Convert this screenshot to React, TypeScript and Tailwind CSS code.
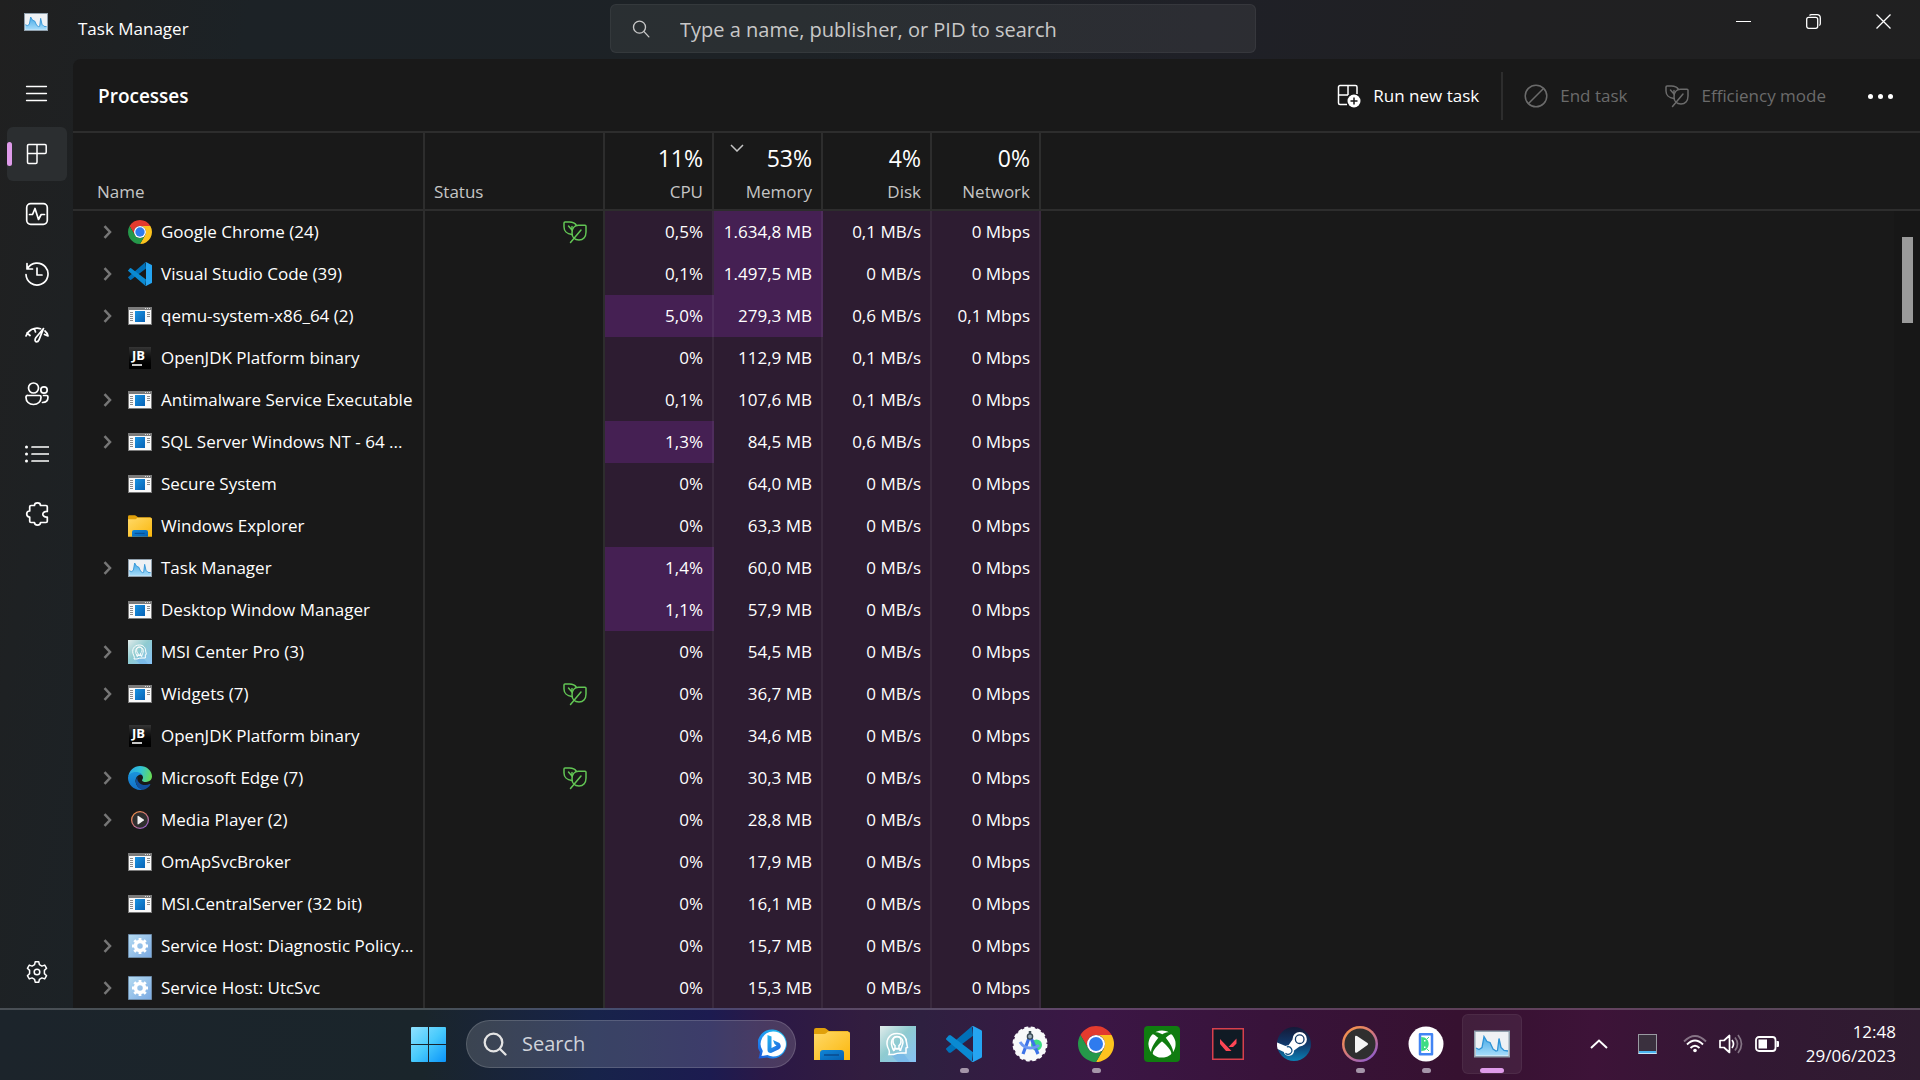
import type { ReactNode } from "react";
import { FaXbox } from "react-icons/fa";

type IconName = "chrome" | "vscode" | "app" | "jb" | "explorer" | "taskmgr" | "msi" | "edge" | "media" | "service";

/* ---------- application icons ---------- */

function Chrome({ className }: { className: string }) {
  return (
    <svg viewBox="2 2 44 44" className={className} aria-hidden="true">
      <path fill="#e33b2e" d="M14.47 29.5 4.95 13A22 22 0 0 1 43.05 13H24a11 11 0 0 0-9.53 16.5z" />
      <path fill="#fcc31e" d="M24 13h19.05A22 22 0 0 1 24 46l9.53-16.5A11 11 0 0 0 24 13z" />
      <path fill="#25984a" d="M33.53 29.5 24 46A22 22 0 0 1 4.95 13l9.52 16.5a11 11 0 0 0 19.06 0z" />
      <circle cx="24" cy="24" r="11" fill="#fff" />
      <circle cx="24" cy="24" r="8.6" fill="#2f7bee" />
    </svg>
  );
}

function VSCode({ className }: { className: string }) {
  return (
    <svg viewBox="0 0 100 100" className={className} aria-hidden="true">
      <path fill="#0070b8" d="M72 1 1 62q-2 2 0 4l7 8q2 1 5 0L75 27z" />
      <path fill="#0a8ad2" d="M72 99 1 38q-2-2 0-4l7-8q2-1 5 0l62 47z" />
      <path fill="#25a5f2" d="M71 1q3-2 6 0l20 10q3 1 3 4v70q0 3-3 4L77 99q-3 2-6 0 4 0 4-5V6q0-5-4-5z" />
    </svg>
  );
}

function AppWindow({ className }: { className: string }) {
  return (
    <svg viewBox="0 0 24 24" className={className} aria-hidden="true">
      <defs>
        <linearGradient id="appBlue" x1="0" y1="0" x2="1" y2="1">
          <stop offset="0" stopColor="#1a94e2" />
          <stop offset="1" stopColor="#0862b5" />
        </linearGradient>
      </defs>
      <path fill="#7b7b7b" d="M0 3h24v18H0z" />
      <path fill="#fafafa" d="M1 6h22v14H1z" />
      <path stroke="#ddd" d="M17 4.5h1M19 4.5h1M21 4.5h1" />
      <path stroke="#8b8b8b" d="M2 8.5h3M2 10.5h3M2 12.5h3M2 14.5h3M2 16.5h3M19 8.5h3M19 10.5h3M19 12.5h3" />
      <path fill="url(#appBlue)" d="M7 7h10v11H7z" />
    </svg>
  );
}

function JetBrains() {
  return (
    <span className="mx-px flex h-[22px] w-[22px] flex-col items-start bg-gradient-to-b from-[#353535] to-black pl-[3px] font-['Open_Sans',sans-serif]">
      <span className="text-[13px] leading-4 font-bold text-white">JB</span>
      <span className="mt-px h-0.5 w-2.5 bg-[#c8c8c8]" />
    </span>
  );
}

function Explorer({ className }: { className: string }) {
  return (
    <svg viewBox="0 0 36 36" className={className} aria-hidden="true">
      <defs>
        <linearGradient id="folder" x1="0" y1="0" x2="1" y2="1">
          <stop offset="0" stopColor="#ffd968" />
          <stop offset="1" stopColor="#fbb70c" />
        </linearGradient>
        <linearGradient id="folderBlue" x1="0" y1="0" x2="1" y2="1">
          <stop offset="0" stopColor="#1086d8" />
          <stop offset="1" stopColor="#0660b0" />
        </linearGradient>
      </defs>
      <path fill="#e0a00a" d="M0 4q0-2 2-2h8q1.5 0 2.5 1L15 5h19v6H0z" />
      <path fill="url(#folder)" d="M0 8h10q1.5 0 2.5-1l1.5-1.5h20q2 0 2 2V34H0z" />
      <path fill="url(#folderBlue)" d="M6 34v-7q0-3 3-3h18q3 0 3 3v7z" />
      <path stroke="#0a4a8c" strokeWidth="1.5" d="M10 29h15" />
    </svg>
  );
}

function TaskManagerIcon({ className }: { className: string }) {
  return (
    <svg viewBox="0 0 36 36" className={className} aria-hidden="true">
      <defs>
        <linearGradient id="tmArea" x1="0" y1="0" x2="0" y2="1">
          <stop offset="0" stopColor="#45a9e6" />
          <stop offset="1" stopColor="#a6dcfa" />
        </linearGradient>
      </defs>
      <path fill="#8f9fac" d="M0 4.5h36v27H0z" />
      <path fill="#eef1f4" d="M1.5 6h33v24h-33z" />
      <path fill="url(#tmArea)" d="M2 29.5V22l3 1.5 3-2 2-11 3 5 3 1 3 6.5 3 2 1.5-.5 1.5-12 2 9 3 3h1l3 .5v4.5z" />
      <path fill="none" stroke="#2e93d6" strokeWidth="1.3" d="m2 22 3 1.5 3-2 2-11 3 5 3 1 3 6.5 3 2 1.5-.5 1.5-12 2 9 3 3 4 .5" />
    </svg>
  );
}

function MsiCenter({ className }: { className: string }) {
  return (
    <svg viewBox="0 0 36 36" className={className} aria-hidden="true">
      <defs>
        <linearGradient id="msiBg" x1="0" y1="0" x2="1" y2="1">
          <stop offset="0" stopColor="#e2eceb" />
          <stop offset=".45" stopColor="#8fcbd0" />
          <stop offset="1" stopColor="#86c2f6" />
        </linearGradient>
      </defs>
      <path fill="url(#msiBg)" d="M0 0h36v36H0z" />
      <path fill="#6fb2ea" opacity=".6" d="M10 28h14l6 8H18z" />
      <g fill="none" stroke="#fff" strokeWidth="1.5">
        <path d="M9 28.5q1-2 0-4.500C4 15 9 7.500 17 7.500c6 0 9.500 4 9.500 9l1 5-1.500.5v5h-5q-4 0-7.500 1.500z" />
        <path d="M14 25q-3-5-2.500-9c.5-7 11-7 11.500 0 0 4-2 5-2.500 9" />
        <path d="M14 25v-2h6v2M17 10.500c-5 0-5 7-2 9v3h4v-3c3-2 3-9-2-9z" />
      </g>
    </svg>
  );
}

function Edge({ className }: { className: string }) {
  return (
    <svg viewBox="0 0 24 24" className={className} aria-hidden="true">
      <defs>
        <linearGradient id="edgeTop" x1="0" y1=".3" x2="1" y2=".5">
          <stop offset="0" stopColor="#2aa6e6" />
          <stop offset=".5" stopColor="#31c4d4" />
          <stop offset="1" stopColor="#67dc57" />
        </linearGradient>
        <linearGradient id="edgeLow" x1="0" y1="0" x2="0" y2="1">
          <stop offset="0" stopColor="#1a94dc" />
          <stop offset="1" stopColor="#1470c8" />
        </linearGradient>
      </defs>
      <path fill="url(#edgeTop)" d="M.3 10.5C1.200 4.500 6 0 12 0c7 0 12 5 12 10.300 0 3.700-3 5.700-6 5.700-2.500 0-4-.9-4-1.800 0-.7 1-1 1-2.700 0-2.500-2.500-4.500-6-4.500C5 7 1.500 8.500.3 10.500z" />
      <path fill="url(#edgeLow)" d="M0 12c0-3.500 3.500-6 8-6 4.500 0 7 2.500 7 5.300 0-1.500-1.500-2.800-3-2.800-3.500 1-5.500 5-4 9 1.200 3.500 4.500 6 7.500 6.200C7.500 25.500 0 19.500 0 12z" />
      <path fill="#124f9c" d="M9.500 11c-2 2.500-2.200 5.500-.5 8.500 1.500 2.700 4.500 4.500 6.500 4.200 3-.7 5.500-2.700 6.800-5 .3-.5-.1-.8-.6-.6-3.200 1.500-8 1.500-10.700-1.600C9.500 15 9 13 9.500 11z" />
    </svg>
  );
}

function MediaPlayer({ className }: { className: string }) {
  return (
    <svg viewBox="0 0 36 36" className={className} aria-hidden="true">
      <defs>
        <linearGradient id="mpRing" x1="0" y1="0" x2=".8" y2="1">
          <stop offset="0" stopColor="#ff9a3c" />
          <stop offset=".5" stopColor="#d87a78" />
          <stop offset="1" stopColor="#8b5bd0" />
        </linearGradient>
      </defs>
      <circle cx="18" cy="18" r="18" fill="url(#mpRing)" />
      <circle cx="18" cy="18" r="15.5" fill="#2f2f2f" />
      <path fill="#f4f4f4" d="M13 11q0-2 2-1l10.500 7q1.300 1 0 2L15 26.500q-2 1-2-1z" />
    </svg>
  );
}

function ServiceGear({ className }: { className: string }) {
  return (
    <svg viewBox="0 0 24 24" className={className} aria-hidden="true">
      <defs>
        <linearGradient id="svcBg" x1="0" y1="0" x2="1" y2="1">
          <stop offset="0" stopColor="#b5dcf2" />
          <stop offset="1" stopColor="#7aa9e2" />
        </linearGradient>
      </defs>
      <path fill="url(#svcBg)" stroke="#6d8ba8" d="M.5.5h23v23H.5z" />
      <circle cx="12" cy="12" r="4.500" fill="none" stroke="#fff" strokeWidth="3.500" />
      <path stroke="#fff" strokeWidth="2.800" d="M12 4v3M12 17v3M4 12h3M17 12h3M6.300 6.300l2 2M15.700 15.700l2 2M6.300 17.700l2-2M15.700 8.300l2-2" />
    </svg>
  );
}

function AndroidStudio({ className }: { className: string }) {
  return (
    <svg viewBox="0 0 36 36" className={className} aria-hidden="true">
      <circle cx="18" cy="18" r="16.5" fill="#f8f9fa" stroke="#f8f9fa" strokeWidth="2" strokeDasharray="4 2.500" />
      <circle cx="24.500" cy="19" r="5.500" fill="#3ddc84" />
      <path fill="none" stroke="#3d73e8" strokeWidth="3.200" d="m17 12-6 16M19 12l7 16" />
      <path fill="none" stroke="#6b97f2" strokeWidth="3" d="M8 16q4 6 10 6 6 0 9-3" />
      <path stroke="#3b4a54" strokeWidth="2.500" d="M18 5v4" />
      <circle cx="18" cy="10.500" r="2.600" fill="#9fb0bb" stroke="#3b4a54" strokeWidth="1.400" />
    </svg>
  );
}

function Xbox() {
  return (
    <span className="flex h-9 w-9 items-center justify-center rounded-sm bg-[#107c10]">
      <FaXbox className="h-7 w-7 text-white" />
    </span>
  );
}

function Valorant({ className }: { className: string }) {
  return (
    <svg viewBox="0 0 36 36" className={className} aria-hidden="true">
      <path fill="#101a24" stroke="#d8404c" strokeWidth="1.500" d="M2.750 2.750h30.500v30.500H2.750z" />
      <path fill="#ff4655" d="M10 13v5l6 7h5.500zM26.500 12.500v5L23 21h-4.500z" />
    </svg>
  );
}

function Steam({ className }: { className: string }) {
  return (
    <svg viewBox="0 0 36 36" className={className} aria-hidden="true">
      <defs>
        <linearGradient id="steamBg" x1="0" y1="0" x2="0" y2="1">
          <stop offset="0" stopColor="#141a38" />
          <stop offset=".5" stopColor="#10386a" />
          <stop offset="1" stopColor="#0b80b4" />
        </linearGradient>
      </defs>
      <circle cx="18" cy="18" r="17" fill="url(#steamBg)" />
      <path fill="#fff" d="M1.100 16.500 9.500 20q1.300-.8 3-.8l4-5.700v-.3a7.200 7.200 0 1 1 7.200 7.200h-.2l-5.500 4v.3a5.200 5.200 0 0 1-10.200 1.200L1.600 23a17 17 0 0 1-.5-6.500z" />
      <circle cx="23.700" cy="13.200" r="4.300" fill="#fff" stroke="#123a68" strokeWidth="1.300" />
      <path fill="none" stroke="#0e4c80" strokeWidth="1.200" d="M9.500 27.300a3.800 3.800 0 1 0 1.300-6.400" />
    </svg>
  );
}

function AndroidEmulator({ className }: { className: string }) {
  return (
    <svg viewBox="0 0 36 36" className={className} aria-hidden="true">
      <circle cx="18" cy="18" r="17.500" fill="#fff" />
      <path fill="#fff" stroke="#4285f4" strokeWidth="2.500" strokeLinejoin="round" d="M12 8.200h12v20H12z" />
      <path fill="#3ddc84" d="M13.200 11c5 0 7.500 3.500 7.500 7s-2.500 7-7.500 7z" />
      <path stroke="#3ddc84" d="m19 13 2-2M19 23l2 2" />
      <path fill="#fff" d="M16 14h1.500v1.500H16zM16 20.500h1.500V22H16z" />
    </svg>
  );
}

function WindowsLogo() {
  return (
    <svg viewBox="0 0 35 35" className="h-[35px] w-[35px]" aria-hidden="true">
      <defs>
        <linearGradient id="win" x1="0" y1="0" x2="35" y2="35" gradientUnits="userSpaceOnUse">
          <stop offset="0" stopColor="#90e2ff" />
          <stop offset=".5" stopColor="#48cafc" />
          <stop offset="1" stopColor="#0a94fa" />
        </linearGradient>
      </defs>
      <path fill="url(#win)" d="M1 0h16v17H0V1q0-1 1-1zM18 0h16q1 0 1 1v16H18zM0 18h17v17H1q-1 0-1-1zM18 18h17v16q0 1-1 1H18z" />
    </svg>
  );
}

function Bing() {
  return (
    <svg viewBox="0 0 30 30" className="h-[30px] w-[30px]" aria-hidden="true">
      <defs>
        <linearGradient id="bingRing" x1="1" y1="0" x2="0" y2="1">
          <stop offset="0" stopColor="#22c8f0" />
          <stop offset=".6" stopColor="#1d8ff0" />
          <stop offset="1" stopColor="#1a52d8" />
        </linearGradient>
        <linearGradient id="bingB" x1="0" y1="0" x2="1" y2="1">
          <stop offset="0" stopColor="#25b8ee" />
          <stop offset="1" stopColor="#1c5ee0" />
        </linearGradient>
      </defs>
      <path fill="url(#bingRing)" d="M15 .5A14.500 14.500 0 1 1 9 28.500L1 29.500q-1-.5 0-1.500l1-5A14.500 14.500 0 0 1 15 .5z" />
      <path fill="#fff" d="M15 2.500A12.500 12.500 0 1 1 9.500 26L3.500 27l1.300-5A12.500 12.500 0 0 1 15 2.500z" />
      <path fill="url(#bingB)" d="m9.500 6 4 1.500V19l5-2.500-2-1.500-1.500-4 6.500 3q3 4-1 6.500L13 24q-3.500 0-3.500-3z" />
    </svg>
  );
}

const iconFor: Record<IconName, ReactNode> = {
  chrome: <Chrome className="h-6 w-6" />,
  vscode: <VSCode className="h-6 w-6" />,
  app: <AppWindow className="h-6 w-6" />,
  jb: <JetBrains />,
  explorer: <Explorer className="h-6 w-6" />,
  taskmgr: <TaskManagerIcon className="h-6 w-6" />,
  msi: <MsiCenter className="h-6 w-6" />,
  edge: <Edge className="h-6 w-6" />,
  media: <MediaPlayer className="m-[3px] h-[18px] w-[18px]" />,
  service: <ServiceGear className="h-6 w-6" />,
};

/* ---------- line icons ---------- */

function Line({ children, className = "h-6 w-6", width = 1.5 }: { children: ReactNode; className?: string; width?: number }) {
  return (
    <svg viewBox="0 0 24 24" className={className} fill="none" stroke="currentColor" strokeWidth={width} strokeLinecap="round" strokeLinejoin="round" aria-hidden="true">
      {children}
    </svg>
  );
}

function Leaf({ className }: { className: string }) {
  return (
    <Line className={className}>
      <path d="M8.800 14.500C4 14 1 11 1 7V3a1 1 0 0 1 1-1h4.500c3 0 5.500 1 7 3.300" />
      <path d="M15.500 5.200H22a1 1 0 0 1 1 1V12c0 5-3 8-7 8-4.500 0-7-3-7-7 0-4.500 2.500-7.800 6.500-7.800z" />
      <path d="M18 10 7.500 22.500M5.500 6l3.700 4.300M9 6.500v3.700" />
    </Line>
  );
}

const navItems: { label: string; icon: ReactNode }[] = [
  { label: "Processes", icon: <Line><path d="M3.700 2.500h16.300a1.200 1.200 0 0 1 1.200 1.200v6.600a1.200 1.200 0 0 1-1.200 1.200H2.500M12 2.500v17.800a1.200 1.200 0 0 1-1.200 1.200H3.700a1.200 1.200 0 0 1-1.200-1.200V3.700a1.200 1.200 0 0 1 1.200-1.200" /></Line> },
  { label: "Performance", icon: <Line width={1.7}><rect x="1.700" y="1.700" width="20.600" height="20.600" rx="4" /><path d="M4.500 12.500h3l2.500-6 3.500 11 2.700-5h3.300" /></Line> },
  { label: "App history", icon: <Line width={1.7}><path d="M2 1.500V7h5.500M2.500 6.500A11 11 0 1 1 1 12.500M12 6v7h5" /></Line> },
  { label: "Startup apps", icon: <Line width={1.7}><path d="M1 14c1-3 3-5 5.500-6.500 3-1.500 6.500-1.700 9-.8M2 11l3 2.500M9.500 7l1 3M18.500 6.500l-7.700 9.300c-1.500 2.500-.5 4 .7 4s2-.8 2.500-2zM20 9c1.500 1.200 2.500 3 3 5l-3.500-1.500" /></Line> },
  { label: "Users", icon: <Line width={1.7}><circle cx="8.500" cy="6" r="5" /><circle cx="19" cy="8" r="3.200" /><path d="M3 13.500h11.500a1.500 1.500 0 0 1 1.500 1.500v.5c0 4-3 7-7.500 7S1 19.500 1 15.500V15a1.500 1.500 0 0 1 2-1.500zM18.500 13.500h3a1.500 1.500 0 0 1 1.500 1.500c0 4-2.500 5.500-5.500 5.500" /></Line> },
  { label: "Details", icon: <Line width={1.7}><path d="M7 5h16.500M7 12h16.500M7 19h16.500" /><path strokeWidth="3" d="M1.500 5h0M1.500 12h0M1.500 19h0" /></Line> },
  { label: "Services", icon: <Line width={1.7}><path d="M4.700 9V4.800A1.300 1.300 0 0 1 6 3.500h3.500c0-3.500 6-3.500 6 0H21a1.300 1.300 0 0 1 1.300 1.300v4.700c-6-.5-6 6 0 5.500v4.200a1.300 1.300 0 0 1-1.300 1.300h-5.500c0 3.500-6 3.500-6 0H6a1.300 1.300 0 0 1-1.300-1.300V15c-4 0-4-6 0-6z" /></Line> },
];

function NavButton({ label, active = false, children }: { label: string; active?: boolean; children: ReactNode }) {
  return (
    <button
      type="button"
      aria-label={label}
      className={`flex h-[54px] w-[60px] items-center rounded-md text-white ${active ? "bg-[#2b2e30]" : ""}`}
    >
      <span className={`h-6 w-[5px] rounded-full ${active ? "bg-[#df9bea]" : ""}`} />
      <span className="ml-[13px]">{children}</span>
    </button>
  );
}

/* ---------- data ---------- */

interface Process {
  name: string;
  icon: IconName;
  expandable?: boolean;
  efficient?: boolean;
  cpu: string;
  memory: string;
  disk: string;
  network?: string;
  hotCpu?: boolean;
  hotMemory?: boolean;
}

const processes: Process[] = [
  { name: "Google Chrome (24)", icon: "chrome", expandable: true, efficient: true, cpu: "0,5%", memory: "1.634,8 MB", disk: "0,1 MB/s", hotMemory: true },
  { name: "Visual Studio Code (39)", icon: "vscode", expandable: true, cpu: "0,1%", memory: "1.497,5 MB", disk: "0 MB/s", hotMemory: true },
  { name: "qemu-system-x86_64 (2)", icon: "app", expandable: true, cpu: "5,0%", memory: "279,3 MB", disk: "0,6 MB/s", network: "0,1 Mbps", hotCpu: true, hotMemory: true },
  { name: "OpenJDK Platform binary", icon: "jb", cpu: "0%", memory: "112,9 MB", disk: "0,1 MB/s" },
  { name: "Antimalware Service Executable", icon: "app", expandable: true, cpu: "0,1%", memory: "107,6 MB", disk: "0,1 MB/s" },
  { name: "SQL Server Windows NT - 64 ...", icon: "app", expandable: true, cpu: "1,3%", memory: "84,5 MB", disk: "0,6 MB/s", hotCpu: true },
  { name: "Secure System", icon: "app", cpu: "0%", memory: "64,0 MB", disk: "0 MB/s" },
  { name: "Windows Explorer", icon: "explorer", cpu: "0%", memory: "63,3 MB", disk: "0 MB/s" },
  { name: "Task Manager", icon: "taskmgr", expandable: true, cpu: "1,4%", memory: "60,0 MB", disk: "0 MB/s", hotCpu: true },
  { name: "Desktop Window Manager", icon: "app", cpu: "1,1%", memory: "57,9 MB", disk: "0 MB/s", hotCpu: true },
  { name: "MSI Center Pro (3)", icon: "msi", expandable: true, cpu: "0%", memory: "54,5 MB", disk: "0 MB/s" },
  { name: "Widgets (7)", icon: "app", expandable: true, efficient: true, cpu: "0%", memory: "36,7 MB", disk: "0 MB/s" },
  { name: "OpenJDK Platform binary", icon: "jb", cpu: "0%", memory: "34,6 MB", disk: "0 MB/s" },
  { name: "Microsoft Edge (7)", icon: "edge", expandable: true, efficient: true, cpu: "0%", memory: "30,3 MB", disk: "0 MB/s" },
  { name: "Media Player (2)", icon: "media", expandable: true, cpu: "0%", memory: "28,8 MB", disk: "0 MB/s" },
  { name: "OmApSvcBroker", icon: "app", cpu: "0%", memory: "17,9 MB", disk: "0 MB/s" },
  { name: "MSI.CentralServer (32 bit)", icon: "app", cpu: "0%", memory: "16,1 MB", disk: "0 MB/s" },
  { name: "Service Host: Diagnostic Policy...", icon: "service", expandable: true, cpu: "0%", memory: "15,7 MB", disk: "0 MB/s" },
  { name: "Service Host: UtcSvc", icon: "service", expandable: true, cpu: "0%", memory: "15,3 MB", disk: "0 MB/s" },
];

const usage = [
  { label: "CPU", total: "11%" },
  { label: "Memory", total: "53%", sorted: true },
  { label: "Disk", total: "4%" },
  { label: "Network", total: "0%" },
];

const pinned: { label: string; icon: ReactNode; state?: "running" | "active" }[] = [
  { label: "File Explorer", icon: <Explorer className="h-9 w-9" /> },
  { label: "MSI Center", icon: <MsiCenter className="h-9 w-9" /> },
  { label: "Visual Studio Code", icon: <VSCode className="h-9 w-9" />, state: "running" },
  { label: "Android Studio", icon: <AndroidStudio className="h-9 w-9" /> },
  { label: "Google Chrome", icon: <Chrome className="h-9 w-9" />, state: "running" },
  { label: "Xbox", icon: <Xbox /> },
  { label: "Valorant", icon: <Valorant className="h-9 w-9" /> },
  { label: "Steam", icon: <Steam className="h-9 w-9" /> },
  { label: "Media Player", icon: <MediaPlayer className="h-9 w-9" />, state: "running" },
  { label: "Android Emulator", icon: <AndroidEmulator className="h-9 w-9" />, state: "running" },
  { label: "Task Manager", icon: <TaskManagerIcon className="h-9 w-9" />, state: "active" },
];

/* ---------- sections ---------- */

function TitleBar() {
  return (
    <header className="flex h-[59px] shrink-0 items-start">
      <div className="flex h-full flex-1 items-start">
        <TaskManagerIcon className="mt-2.5 ml-6 h-6 w-6" />
        <h1 className="ml-[30px] pt-[17px] text-[17px] leading-6 text-white">Task Manager</h1>
      </div>
      <label className="mt-1 mr-[54px] flex h-[49px] w-[646px] items-center rounded-md border border-white/5 bg-white/6">
        <Line className="ml-[21px] h-[18px] w-[18px] text-[#c8c8c8]" width={1.8}>
          <circle cx="10" cy="9.500" r="8" />
          <path d="m16 15.500 6.500 7" />
        </Line>
        <input
          type="text"
          aria-label="Search processes"
          placeholder="Type a name, publisher, or PID to search"
          className="mt-0.5 ml-[30px] min-w-0 flex-1 bg-transparent text-[20px] text-white outline-none placeholder:text-[#c8c8c8]"
        />
      </label>
      <div className="flex flex-1 justify-end text-white">
        <div className="flex pr-[2px]">
          <button type="button" aria-label="Minimize" className="flex h-[42px] w-[70px] items-center justify-center">
            <span className="h-px w-[15px] bg-white" />
          </button>
          <button type="button" aria-label="Restore" className="flex h-[42px] w-[70px] items-center justify-center">
            <svg viewBox="0 0 15 15" className="h-[15px] w-[15px]" fill="none" stroke="currentColor" strokeWidth="1.300" aria-hidden="true">
              <rect x=".7" y="3.300" width="11" height="11" rx="2" />
              <path d="M3.500 1.500Q4 .7 5.500.7H11q3.300 0 3.300 3.300v5.500q0 1.500-1 2" />
            </svg>
          </button>
          <button type="button" aria-label="Close" className="flex h-[42px] w-[70px] items-center justify-center">
            <svg viewBox="0 0 15 15" className="h-[15px] w-[15px]" stroke="currentColor" strokeWidth="1.300" aria-hidden="true">
              <path d="m.5.5 14 14M14.500.5l-14 14" />
            </svg>
          </button>
        </div>
      </div>
    </header>
  );
}

function Sidebar() {
  return (
    <nav aria-label="Task Manager pages" className="flex w-[73px] shrink-0 flex-col gap-1.5 pt-2 pb-[9px] pl-[7px]">
      <NavButton label="Open navigation">
        <Line className="h-6 w-6" width={1.3}>
          <path d="M1.500 4.500h20M1.500 11.500h20M1.500 18.500h20" />
        </Line>
      </NavButton>
      {navItems.map((item, i) => (
        <NavButton key={item.label} label={item.label} active={i === 0}>
          {item.icon}
        </NavButton>
      ))}
      <div className="mt-auto">
        <NavButton label="Settings">
          <Line width={1.5}>
            <circle cx="12" cy="12" r="2.800" />
            <path d="M9.600 4.700 10.200 1.800h3.600l.6 2.900 2.500 1.400 2.800-1 1.900 3.200L19.400 10.400v3.200l2.200 2.100-1.900 3.200-2.800-1-2.500 1.400-.6 2.900h-3.600l-.6-2.900-2.500-1.400-2.800 1-1.900-3.200L4.600 13.600v-3.200L2.400 8.300l1.900-3.200 2.800 1z" />
          </Line>
        </NavButton>
      </div>
    </nav>
  );
}

function Toolbar() {
  return (
    <div className="flex h-[74px] shrink-0 items-center border-b-2 border-[#2d2d2d] pt-0.5 text-[17px]">
      <h2 className="flex-1 pl-[25px] text-[19px] font-semibold text-white">Processes</h2>
      <button type="button" className="mr-[22px] flex items-center gap-3 text-white">
        <svg viewBox="0 0 24 24" className="h-6 w-6" fill="none" stroke="currentColor" strokeWidth="1.500" aria-hidden="true">
          <path d="M10 20.500H3A1.500 1.500 0 0 1 1.500 19V3A1.500 1.500 0 0 1 3 1.500h15.500A1.500 1.500 0 0 1 20 3v7M1.500 11H11M11 1.500V11" />
          <circle cx="17" cy="17" r="6.500" fill="currentColor" stroke="none" />
          <path stroke="#191919" d="M17 13.500v7M13.500 17h7" />
        </svg>
        Run new task
      </button>
      <span className="h-12 w-0.5 bg-[#2d2d2d]" />
      <button type="button" disabled className="ml-[21px] flex items-center gap-3 text-[#6b6b6b]">
        <Line><circle cx="12" cy="12" r="10.800" /><path d="m4.500 19.500 15-15" /></Line>
        End task
      </button>
      <button type="button" disabled className="ml-[38px] flex items-center gap-3 text-[#6b6b6b]">
        <Leaf className="h-6 w-6" />
        Efficiency mode
      </button>
      <button type="button" aria-label="More options" className="mr-[27px] ml-[42px] flex gap-[5px]">
        <span className="h-[5px] w-[5px] rounded-full bg-white" />
        <span className="h-[5px] w-[5px] rounded-full bg-white" />
        <span className="h-[5px] w-[5px] rounded-full bg-white" />
      </button>
    </div>
  );
}

function Value({ hot = false, children }: { hot?: boolean; children: ReactNode }) {
  return (
    <td className={`border-r-2 border-white/6 pr-[9px] text-right whitespace-nowrap ${hot ? "bg-[#452053]" : "bg-[#2d1c31]"}`}>{children}</td>
  );
}

function ProcessTable() {
  return (
    <div className="relative min-h-0 flex-1 overflow-hidden">
      <table className="w-full table-fixed border-separate border-spacing-0 text-[17px] leading-6 text-white">
        <colgroup>
          <col className="w-[352px]" />
          <col className="w-[180px]" />
          <col className="w-[109px]" />
          <col className="w-[109px]" />
          <col className="w-[109px]" />
          <col className="w-[109px]" />
          <col />
        </colgroup>
        <thead>
          <tr className="h-[78px] text-[#c5c5c5]">
            <th scope="col" className="border-r-2 border-b-2 border-[#2d2d2d] pb-[5px] pl-6 text-left align-bottom font-normal">Name</th>
            <th scope="col" className="border-r-2 border-b-2 border-[#2d2d2d] pb-[5px] pl-[9px] text-left align-bottom font-normal">Status</th>
            {usage.map((u) => (
              <th key={u.label} scope="col" aria-sort={u.sorted ? "descending" : undefined} className="border-r-2 border-b-2 border-[#2d2d2d] pr-[9px] pb-[5px] align-bottom font-normal">
                <button type="button" className="flex w-full flex-col">
                  <span className="flex w-full items-start justify-end text-[23px] leading-7 text-white">
                    {u.sorted && (
                      <svg viewBox="0 0 14 8" className="mr-auto ml-4 h-2 w-3.5" fill="none" stroke="#c5c5c5" strokeWidth="1.500" aria-hidden="true">
                        <path d="m1 1 6 6 6-6" />
                      </svg>
                    )}
                    {u.total}
                  </span>
                  <span className="mt-2 w-full text-right">{u.label}</span>
                </button>
              </th>
            ))}
            <td className="border-b-2 border-[#2d2d2d]" />
          </tr>
        </thead>
        <tbody>
          {processes.map((p, i) => (
            <tr key={i} className="h-[42px]">
              <td className="border-r-2 border-[#2d2d2d]">
                <div className="flex items-center pl-6 whitespace-nowrap">
                  <span className="flex w-5 justify-center">
                    {p.expandable && (
                      <button type="button" aria-label={`Expand ${p.name}`}>
                        <svg viewBox="0 0 9 14" className="h-3.5 w-[9px]" fill="none" stroke="#767676" strokeWidth="2.500" aria-hidden="true">
                          <path d="m1.500 1.200 5.500 5.800-5.500 5.800" />
                        </svg>
                      </button>
                    )}
                  </span>
                  <span className="mr-[9px] ml-[11px]">{iconFor[p.icon]}</span>
                  {p.name}
                </div>
              </td>
              <td className="border-r-2 border-[#2d2d2d] pr-4">
                {p.efficient && <Leaf className="ml-auto h-6 w-6 text-[#62c554]" />}
              </td>
              <Value hot={p.hotCpu}>{p.cpu}</Value>
              <Value hot={p.hotMemory}>{p.memory}</Value>
              <Value>{p.disk}</Value>
              <Value>{p.network ?? "0 Mbps"}</Value>
              <td />
            </tr>
          ))}
        </tbody>
      </table>
      <div aria-hidden="true" className="absolute top-[78px] right-0 bottom-0 w-[26px] bg-[#171717] pt-[26px] pl-2">
        <div className="h-[86px] w-[11px] bg-[#9a9a9a]" />
      </div>
    </div>
  );
}

function Taskbar() {
  return (
    <footer className="flex h-[72px] shrink-0 items-center border-t-2 border-white/20 bg-[linear-gradient(90deg,#1c242b_0%,#1a252b_22%,#17234a_31%,#1c1b50_37%,#2b1846_40%,#321d3f_45%,#2e2040_48%,#3b1645_57%,#38133a_66%,#361130_76%,#3d1338_83%,#321833_91%,#2f1c30_100%)] bg-origin-border pb-0.5">
      <div className="flex-1 px-3" />
      <div className="flex items-center">
        <button type="button" aria-label="Start" className="flex h-[60px] w-[66px] items-center justify-center">
          <WindowsLogo />
        </button>
        <label className="mr-[3px] ml-[5px] flex h-12 w-[330px] items-center rounded-full border border-white/15 bg-white/15">
          <Line className="ml-4 h-6 w-6 text-[#e4e4e4]" width={2.3}>
            <circle cx="10.500" cy="10.500" r="8.800" />
            <path d="m17 17 5.500 5.500" />
          </Line>
          <input
            type="text"
            aria-label="Search Windows"
            placeholder="Search"
            className="ml-[15px] min-w-0 flex-1 bg-transparent text-[20px] text-white outline-none placeholder:text-[#d0d3da]"
          />
          <span className="mr-[7px]">
            <Bing />
          </span>
        </label>
        {pinned.map((app) => (
          <button key={app.label} type="button" aria-label={app.label} className="relative flex h-[60px] w-[66px] items-center justify-center">
            {app.state === "active" && <span className="absolute inset-x-[3px] inset-y-0 rounded-md border border-white/5 bg-white/6" />}
            <span className="relative">{app.icon}</span>
            {app.state === "running" && <span className="absolute bottom-px h-[5px] w-[9px] rounded-full bg-[#a595a9]" />}
            {app.state === "active" && <span className="absolute bottom-px h-[5px] w-6 rounded-full bg-[#df9bea]" />}
          </button>
        ))}
      </div>
      <div className="flex flex-1 items-center justify-end pr-6 text-white">
        <button type="button" aria-label="Show hidden icons">
          <svg viewBox="0 0 18 10" className="h-2.5 w-[18px]" fill="none" stroke="currentColor" strokeWidth="2" aria-hidden="true">
            <path d="m1 9 8-7.500L17 9" />
          </svg>
        </button>
        <button type="button" aria-label="Task Manager usage" className="ml-[30px] h-5 w-[19px] border border-[#9a9aa2] border-b-[#c4e6fa] bg-[#3a303e]">
          <span className="block h-full border-b-2 border-[#4bb4f0]" />
        </button>
        <button type="button" aria-label="Network, volume and battery" className="ml-[26px] flex items-center gap-3">
          <svg viewBox="0 0 24 18" className="h-[18px] w-6" fill="none" stroke="currentColor" strokeWidth="1.900" aria-hidden="true">
            <path opacity=".4" d="M1 6.500Q12-4.500 23 6.500" />
            <path d="M4 9.500q8-8 16 0M7.500 13q4.500-4.500 9 0" />
            <circle cx="12" cy="15.500" r="1.800" fill="currentColor" stroke="none" />
          </svg>
          <svg viewBox="0 0 24 20" className="h-5 w-6" fill="none" stroke="currentColor" strokeWidth="1.700" strokeLinejoin="round" aria-hidden="true">
            <path d="M1 6.500h4L10.500 1.500v17L5 13.500H1zM13 6q3 4 0 8" />
            <path opacity=".4" d="M16 3.500q5 6.500 0 13M19 1q7 9 0 18" />
          </svg>
          <svg viewBox="0 0 24 16" className="h-4 w-6" fill="none" stroke="currentColor" strokeWidth="1.800" aria-hidden="true">
            <rect x="1" y="1" width="19.500" height="14" rx="3" />
            <path fill="currentColor" stroke="none" d="M3.500 3.500H12v9H3.500zM21.500 5H23q1 0 1 1v4q0 1-1 1h-1.500z" />
          </svg>
        </button>
        <button type="button" className="ml-[27px] text-right text-[17px] leading-6">
          12:48
          <br />
          29/06/2023
        </button>
      </div>
    </footer>
  );
}

export default function App() {
  return (
    <div className="flex h-screen flex-col overflow-hidden bg-[#191919] font-['Open_Sans','Noto_Sans',sans-serif]">
      <div className="flex min-h-0 flex-1 flex-col bg-[linear-gradient(100deg,#202020_0%,#1c2226_12%,#1d2226_38%,#1f2027_58%,#202022_72%,#202020_100%)]">
        <TitleBar />
        <div className="flex min-h-0 flex-1">
          <Sidebar />
          <main className="flex min-w-0 flex-1 flex-col overflow-hidden rounded-tl-lg bg-[#191919]">
            <Toolbar />
            <ProcessTable />
          </main>
        </div>
      </div>
      <Taskbar />
    </div>
  );
}
